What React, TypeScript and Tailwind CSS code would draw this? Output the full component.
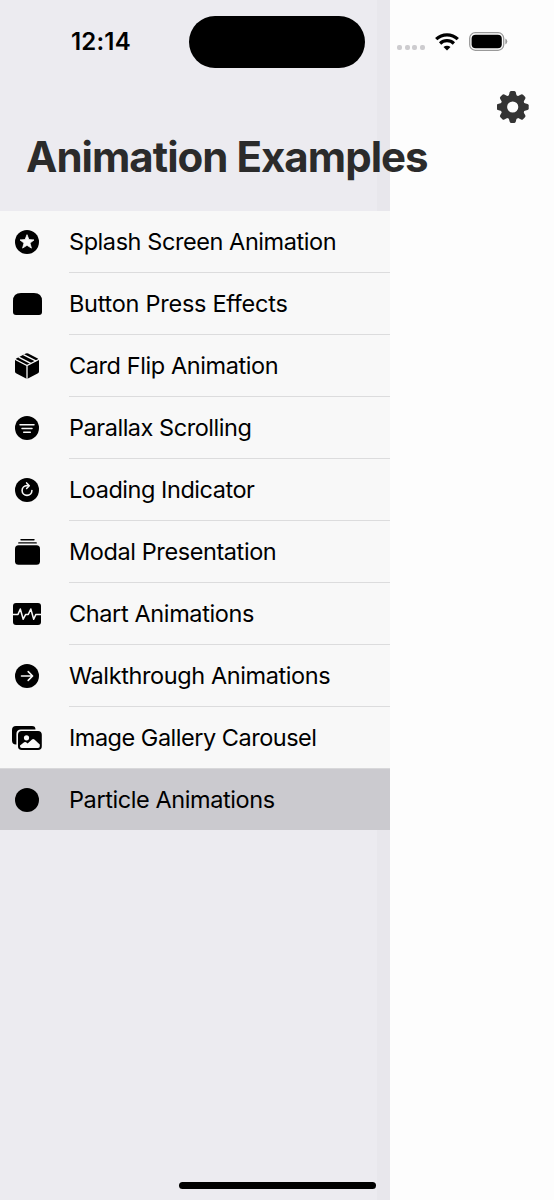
import React from "react";

const Disc = ({ children }: { children?: React.ReactNode }) => (
  <svg className="block h-6 w-6" viewBox="0 0 24 24" fill="none">
    <circle cx="12" cy="12" r="12" fill="#000" />
    {children}
  </svg>
);

const StarIcon = () => (
  <Disc>
    <path
      d="M12 4.700l1.900 4.900 5.100.3-4 3.200 1.400 5-4.400-2.800-4.400 2.800 1.400-5-4-3.200 5.100-.3z"
      fill="#f8f8f8"
      stroke="#f8f8f8"
      strokeWidth="0.800"
      strokeLinejoin="round"
    />
  </Disc>
);

const ButtonIcon = () => (
  <svg className="block h-[22px] w-[29px]" viewBox="0 0 29 22">
    <path d="M8 0h13q8 0 8 8v11q0 3-3 3h-23Q0 22 0 19V8Q0 0 8 0z" />
  </svg>
);

const BoxIcon = () => (
  <svg className="block h-[26px] w-6" viewBox="0 0 24 26">
    <path d="M12 .2q.6 0 1.200.3L22.800 5.500 24 6.800V18.500q0 1.200-1 1.700L12 26 1 20.200q-1-.5-1-1.700V6.800L1.200 5.500 10.800.5q.6-.3 1.200-.3z" />
    <path d="M0 6.300l12 6.200 12-6.200M12 12.500V26" fill="none" stroke="#f8f8f8" strokeWidth="1.300" />
    <path d="M3.600 4.200l12.600 6.500M8.400 1.600l12.800 6.600" fill="none" stroke="#f8f8f8" strokeWidth="1.500" />
  </svg>
);

const LinesIcon = () => (
  <Disc>
    <path d="M5 8.700h14M7 12.500h10M8.700 16.200h6.600" stroke="#f8f8f8" strokeWidth="1.500" strokeLinecap="round" />
  </Disc>
);

const ReloadIcon = () => (
  <Disc>
    <path d="M16.900 12.500a4.900 4.900 0 1 1-4.900-4.900h1.600" stroke="#f8f8f8" strokeWidth="1.600" strokeLinecap="round" />
    <path d="M11.600 4.900l2.700 2.800-2.700 2.800" stroke="#f8f8f8" strokeWidth="1.500" strokeLinecap="round" strokeLinejoin="round" />
  </Disc>
);

const StackIcon = () => (
  <svg className="block h-[26px] w-[25px]" viewBox="0 0 25 26">
    <path d="M6 .8h13M3.800 3.900h17.400" stroke="#000" strokeWidth="1.400" strokeLinecap="round" />
    <rect y="6.200" width="25" height="19.600" rx="3.500" />
  </svg>
);

const WaveIcon = () => (
  <svg className="block h-[22px] w-[28px]" viewBox="0 0 28 22">
    <rect width="28" height="22" rx="3" />
    <path
      d="M0 11.400h5l2.300-5.400 2.900 10.200 2.500-4.800h2.600l2.500-5.400 2.900 10.200 2.200-4.800H28"
      fill="none"
      stroke="#f8f8f8"
      strokeWidth="1.500"
      strokeLinejoin="round"
    />
  </svg>
);

const ArrowIcon = () => (
  <Disc>
    <path d="M6.500 12h11M13.200 7.600l4.400 4.400-4.400 4.400" stroke="#f8f8f8" strokeWidth="1.600" strokeLinecap="round" strokeLinejoin="round" />
  </Disc>
);

const GalleryIcon = () => (
  <svg className="block h-6 w-[30px]" viewBox="0 0 30 24" fill="none">
    <path d="M4 0h16q3.500 0 3.500 3.400H9q-4.600 0-4.600 4.600v10.500H4q-4 0-4-4V4q0-4 4-4z" fill="#000" />
    <rect x="6.800" y="5.800" width="22.200" height="17.400" rx="3" fill="#000" stroke="#000" strokeWidth="1.600" />
    <circle cx="14.500" cy="11.800" r="2.600" fill="#f8f8f8" />
    <path
      d="M8 19.600l4.100-3.300q1-.8 2 0l1.500 1.200 4.400-4.100q1.200-1 2.400 0l5.400 5v1.800q0 1.800-1.800 1.800H9.800Q8 22 8 20.200z"
      fill="#f8f8f8"
    />
  </svg>
);

const rows = [
  { label: "Splash Screen Animation", Icon: StarIcon, tracking: "tracking-[-0.430px]" },
  { label: "Button Press Effects", Icon: ButtonIcon, tracking: "tracking-[-0.270px]" },
  { label: "Card Flip Animation", Icon: BoxIcon, tracking: "tracking-[-0.410px]" },
  { label: "Parallax Scrolling", Icon: LinesIcon, tracking: "tracking-[-0.460px]" },
  { label: "Loading Indicator", Icon: ReloadIcon, tracking: "tracking-[-0.460px]" },
  { label: "Modal Presentation", Icon: StackIcon, tracking: "tracking-[-0.410px]" },
  { label: "Chart Animations", Icon: WaveIcon, tracking: "tracking-[-0.380px]" },
  { label: "Walkthrough Animations", Icon: ArrowIcon, tracking: "tracking-[-0.400px]" },
  { label: "Image Gallery Carousel", Icon: GalleryIcon, tracking: "tracking-[-0.490px]" },
  { label: "Particle Animations", Icon: Disc, tracking: "tracking-[-0.410px]" },
];

const teeth = [0, 45, 90, 135, 180, 225, 270, 315];

const GearIcon = () => (
  <svg className="block h-8 w-8" viewBox="-15.700 -16 32 32">
    <g fill="#343434">
      {teeth.map((a) => (
        <path key={a} d="M-4.200-10.500L-3-14.800Q-2.600-16-1.400-16h2.800Q2.600-16 3-14.800L4.200-10.500z" transform={`rotate(${a})`} />
      ))}
    </g>
    <circle r="8.900" fill="none" stroke="#343434" strokeWidth="6.600" />
  </svg>
);

const WifiIcon = () => (
  <svg className="block h-[18px] w-6" viewBox="0 0 24 18" fill="none" stroke="#000" strokeWidth="3.200">
    <path d="M1.200 6.200a15.500 15.500 0 0 1 21.600 0" />
    <path d="M5.100 10.500a9.900 9.900 0 0 1 13.800 0" />
    <path d="M12 17.600l-3.500-3.500a4.900 4.900 0 0 1 7 0z" fill="#000" stroke="none" />
  </svg>
);

const BatteryIcon = () => (
  <svg className="block h-[19px] w-[39px]" viewBox="0 0 39 19">
    <rect x="0.700" y="0.700" width="34" height="17.600" rx="5.600" fill="none" stroke="#999" strokeWidth="1.300" />
    <rect x="2.600" y="2.700" width="30.200" height="13.600" rx="4" />
    <path d="M36.300 6.500q2 .8 2 3t-2 3z" fill="#999" />
  </svg>
);

export default function App() {
  return (
    <div className="relative flex h-[1200px] w-[554px] overflow-hidden bg-[#fdfdfd] font-['Inter',sans-serif] text-black">
      <aside className="z-10 flex h-full w-[390px] shrink-0 flex-col bg-[linear-gradient(to_right,#ecebf0_377px,#e8e7ec_377px)]">
        <header className="flex h-[211px] shrink-0 flex-col">
          <div className="flex h-[83px] items-center pl-[71px] text-[24px] font-semibold leading-none">
            <time className="tracking-[0.200px]">12:14</time>
          </div>
          <h1 className="mt-[49px] pl-[26px] text-[42px] leading-[50px] font-bold tracking-[-0.970px] whitespace-nowrap text-[#2b2b2b]">
            Animation Examples
          </h1>
        </header>
        <ul className="flex flex-col">
          {rows.map(({ label, Icon, tracking }, i) => {
            const selected = i === rows.length - 1;
            const last = i === rows.length - 2;
            return (
              <li
                key={label}
                className={
                  selected
                    ? "flex h-[61px] bg-[#cbcacf]"
                    : last
                      ? "flex h-[62px] border-b border-[#d8d8da] bg-[#f8f8f8]"
                      : "flex h-[62px] bg-[#f8f8f8]"
                }
              >
                <div className="flex w-[54px] items-center justify-center">
                  <Icon />
                </div>
                <div
                  className={
                    selected || last
                      ? "ml-[15px] flex flex-1 items-center pt-px"
                      : "ml-[15px] flex flex-1 items-center border-b border-[#dcdcdd] pt-px"
                  }
                >
                  <span className={`text-[23.5px] leading-8 whitespace-nowrap ${tracking}`}>{label}</span>
                </div>
              </li>
            );
          })}
        </ul>
      </aside>
      <main className="flex flex-1 flex-col">
        <div className="flex h-[83px] items-center pl-[7px]">
          <div className="mt-3 flex gap-[2.500px]">
            <i className="h-[5px] w-[5px] rounded-[2px] bg-[#cdcccf]" />
            <i className="h-[5px] w-[5px] rounded-[2px] bg-[#cdcccf]" />
            <i className="h-[5px] w-[5px] rounded-[2px] bg-[#cdcccf]" />
            <i className="h-[5px] w-[5px] rounded-[2px] bg-[#cdcccf]" />
          </div>
          <div className="ml-[10.500px]">
            <WifiIcon />
          </div>
          <div className="ml-[10px]">
            <BatteryIcon />
          </div>
        </div>
        <button aria-label="Settings" className="mt-2 mr-[25px] self-end">
          <GearIcon />
        </button>
      </main>
      <div className="absolute top-[15.500px] left-[189px] z-20 h-[52px] w-[176px] rounded-full bg-black" />
      <div className="absolute top-[1181.500px] left-[178.500px] z-20 h-[7px] w-[197.500px] rounded-full bg-black" />
    </div>
  );
}
